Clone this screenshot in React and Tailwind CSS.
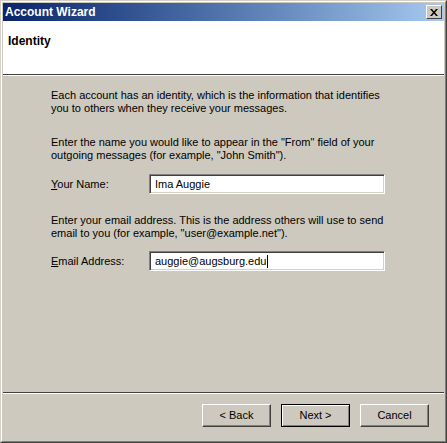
const FONT = { fontFamily: '"Liberation Sans", Arial, sans-serif' }

function Field({ accel, rest, value, caret }) {
  return (
    <div className="flex items-center h-5">
      <span className="w-[98px] text-[11px] text-black">
        <span className="underline">{accel}</span>
        {rest}
      </span>
      <div className="w-[236px] h-5 bg-white border border-t-[#808080] border-l-[#808080] border-b-white border-r-white shadow-[inset_1px_1px_0_#404040,inset_-1px_-1px_0_#d4d0c8] flex items-center pl-[5px] text-[11px] text-black">
        {value}
        {caret && <span className="inline-block w-px h-[13px] bg-black ml-px" />}
      </div>
    </div>
  )
}

function Button({ children, primary }) {
  return (
    <button
      type="button"
      className={
        'w-[69px] h-[23px] bg-[#cdc9be] text-[11px] text-black flex items-center justify-center ' +
        (primary
          ? 'border border-black shadow-[inset_1px_1px_0_#fff,inset_-1px_-1px_0_#808080]'
          : 'border border-t-white border-l-white border-b-[#404040] border-r-[#404040] shadow-[inset_-1px_-1px_0_#808080]')
      }
    >
      {children}
    </button>
  )
}

export default function App() {
  return (
    <div
      className="w-[447px] h-[443px] bg-[#cdc9be] border border-t-[#d4d0c8] border-l-[#d4d0c8] border-b-[#404040] border-r-[#404040] flex flex-col"
      style={FONT}
    >
      <div className="flex-1 flex flex-col border border-t-white border-l-white border-b-[#808080] border-r-[#808080] p-px">
        {/* title bar */}
        <div className="h-[18px] bg-gradient-to-r from-[#0a246a] to-[#a6caf0] flex items-center justify-between pl-[2px] pr-[2px]">
          <span className="text-white font-bold text-[12px] leading-none">Account Wizard</span>
          <div className="w-4 h-[14px] bg-[#cdc9be] border border-t-white border-l-white border-b-[#404040] border-r-[#404040] flex items-center justify-center">
            <svg width="8" height="7" viewBox="0 0 8 7">
              <path d="M0 0h2l2 2.5L6 0h2L5 3.5 8 7H6L4 4.5 2 7H0l3-3.5z" fill="#000" />
            </svg>
          </div>
        </div>

        {/* header */}
        <div className="h-[54px] bg-white border-b border-b-[#404040] shadow-[0_1px_0_#fff] pl-[5px] pt-[7px]">
          <span className="font-bold text-[12px] text-black">Identity</span>
        </div>

        {/* body */}
        <div className="flex-1 flex flex-col pl-[48px] pt-[14px] text-[11px] leading-[13px] text-black">
          <p>
            Each account has an identity, which is the information that identifies
            <br />
            you to others when they receive your messages.
          </p>
          <p className="mt-[21px]">
            Enter the name you would like to appear in the "From" field of your
            <br />
            outgoing messages (for example, "John Smith").
          </p>
          <div className="mt-[12px]">
            <Field accel="Y" rest="our Name:" value="Ima Auggie" />
          </div>
          <p className="mt-[20px]">
            Enter your email address. This is the address others will use to send
            <br />
            email to you (for example, "user@example.net").
          </p>
          <div className="mt-[11px]">
            <Field accel="E" rest="mail Address:" value="auggie@augsburg.edu" caret />
          </div>
        </div>

        {/* footer */}
        <div className="border-t border-t-[#404040] shadow-[inset_0_1px_0_#fff] h-[48px] flex justify-end items-start pt-[11px] pr-[15px] gap-[10px]">
          <Button>&lt; Back</Button>
          <Button primary>Next &gt;</Button>
          <Button>Cancel</Button>
        </div>
      </div>
    </div>
  )
}
